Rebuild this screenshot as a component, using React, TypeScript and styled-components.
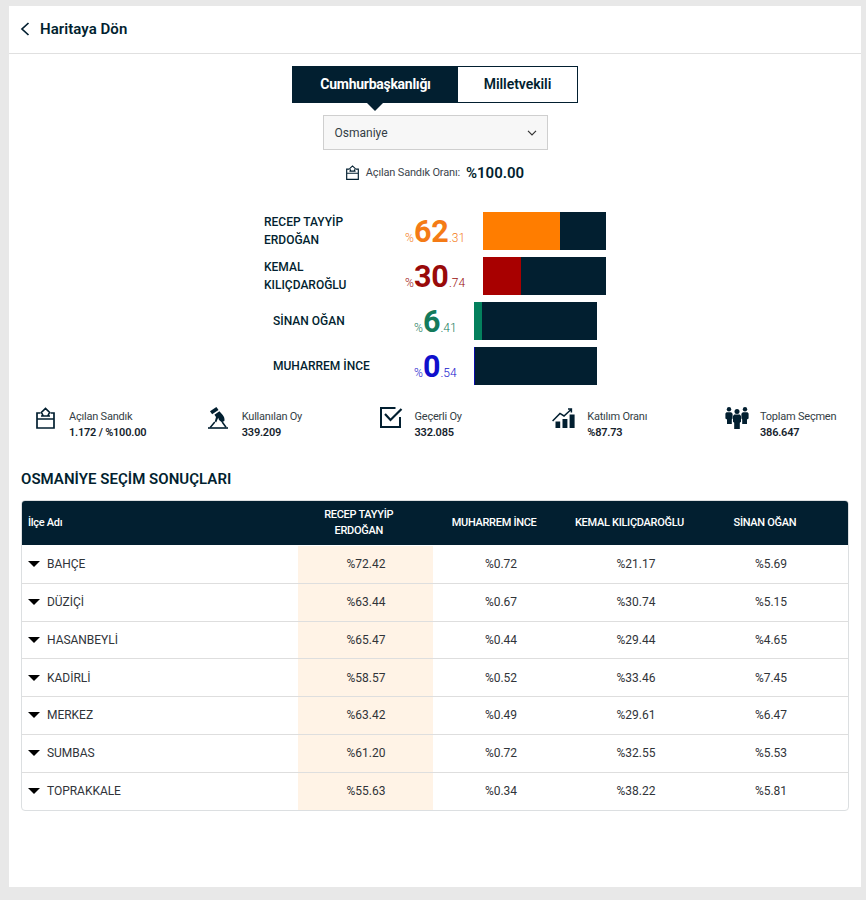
import React from "react";
import styled, { createGlobalStyle } from "styled-components";

const NAVY = "#021f30";

const GlobalStyle = createGlobalStyle`
  *, *::before, *::after { box-sizing: border-box; }
  html { background: #e8e8e8; }
  body { margin: 0; background: #e8e8e8; font-family: Roboto, "Liberation Sans", sans-serif; color: ${NAVY}; }
`;

const Page = styled.div`
  height: 900px;
  padding: 6px 5px 13px 9px;
`;

const Panel = styled.main`
  height: 881px;
  background: #fff;
`;

const Header = styled.header`
  display: flex;
  align-items: center;
  gap: 9px;
  height: 48px;
  padding: 0 0 1px 11px;
  border-bottom: 1px solid #e0e0e0;
`;

const BackLabel = styled.span`
  font-size: 15px;
  font-weight: 600;
  line-height: 20px;
  letter-spacing: 0.05px;
`;

const Selection = styled.section`
  display: flex;
  flex-direction: column;
  align-items: center;
  padding: 12px 0 0 0;
`;

const Tabs = styled.div`
  display: flex;
  width: 286px;
  height: 37px;
  border: 1px solid ${NAVY};
`;

const Tab = styled.div<{ $active?: boolean }>`
  position: relative;
  display: flex;
  align-items: center;
  justify-content: center;
  width: ${(p) => (p.$active ? "165px" : "119px")};
  padding-bottom: 1px;
  background: ${(p) => (p.$active ? NAVY : "#fff")};
  color: ${(p) => (p.$active ? "#fff" : NAVY)};
  font-size: 14px;
  font-weight: ${(p) => (p.$active ? 700 : 600)};
  letter-spacing: ${(p) => (p.$active ? "-0.27px" : "-0.05px")};
`;

const TabPointer = styled.span`
  position: absolute;
  top: 100%;
  left: 50%;
  margin-left: -9.5px;
  border: 9px solid transparent;
  border-top-color: ${NAVY};
  border-bottom: 0;
`;

const CitySelect = styled.div`
  display: flex;
  align-items: center;
  justify-content: space-between;
  width: 225px;
  height: 35px;
  margin-top: 12px;
  padding: 0 10px 0 11px;
  border: 1px solid #cfcfcf;
  background: #f7f7f7;
  color: #333d45;
  font-size: 12px;
`;

const OpenedRate = styled.div`
  display: flex;
  align-items: center;
  height: 20px;
  margin-top: 13px;
`;

const RateLabel = styled.span`
  margin: -2px 6px 0 7px;
  color: #3c454d;
  font-size: 11px;
  font-weight: 400;
  letter-spacing: -0.17px;
`;

const RateValue = styled.span`
  font-size: 15px;
  font-weight: 600;
`;

const Candidates = styled.section`
  display: flex;
  flex-direction: column;
  align-items: center;
  gap: 7px;
  padding-top: 29px;
`;

const CandidateRow = styled.div`
  display: flex;
  align-items: center;
  height: 38px;
`;

const CandidateName = styled.div`
  width: 141px;
  padding-right: 40px;
  font-size: 12px;
  font-weight: 500;
  line-height: 18px;
`;

const Score = styled.div<{ $color: string; $wide: boolean }>`
  display: flex;
  align-items: baseline;
  width: ${(p) => (p.$wide ? "78px" : "60px")};
  padding-top: 7px;
  color: ${(p) => p.$color};
  font-size: 12px;
  font-weight: 300;
  line-height: 38px;
`;

const ScoreWhole = styled.strong`
  font-size: 30.5px;
  font-weight: 700;
`;

const Bar = styled.div`
  width: 123px;
  height: 38px;
  background: ${NAVY};
`;

const BarFill = styled.div<{ $color: string }>`
  height: 100%;
  background: ${(p) => p.$color};
`;

const Stats = styled.section`
  display: grid;
  grid-template-columns: repeat(5, 172.75px);
  height: 34px;
  margin-top: 22px;
  padding-left: 25px;
`;

const Stat = styled.div`
  display: flex;
  align-items: flex-start;
`;

const StatIcon = styled.div<{ $shift?: number }>`
  width: 35px;
  height: 26px;
  flex: none;
  padding-left: ${(p) => p.$shift ?? 0}px;
`;

const StatText = styled.div`
  padding-top: 2px;
  font-size: 11px;
  line-height: 16px;
  font-weight: 400;
  letter-spacing: -0.22px;
  color: #343e46;
  white-space: nowrap;
`;

const StatValue = styled.div`
  font-weight: 600;
  color: #16232d;
`;

const Heading = styled.h2`
  margin: 28px 0 0 12px;
  font-size: 15px;
  font-weight: 600;
  line-height: 20px;
  letter-spacing: 0.04px;
`;

const Table = styled.div`
  width: 828px;
  margin: 11px 0 0 12px;
  border: 1px solid #dcdfe1;
  border-radius: 4px;
  overflow: hidden;
`;

const TableHead = styled.div`
  display: grid;
  grid-template-columns: 269px repeat(4, 135.4px);
  align-items: center;
  height: 44px;
  background: ${NAVY};
  color: #fff;
  font-size: 11px;
  font-weight: 500;
  line-height: 16px;
  letter-spacing: -0.3px;
`;

const HeadCell = styled.div<{ $first?: boolean }>`
  padding: ${(p) => (p.$first ? "0 0 0 6px" : "0 28px")};
  text-align: ${(p) => (p.$first ? "left" : "center")};
  display: flex;
  justify-content: ${(p) => (p.$first ? "flex-start" : "center")};
`;

const HeadText = styled.span<{ $wrap?: boolean }>`
  flex: none;
  width: ${(p) => (p.$wrap ? "80px" : "auto")};
  white-space: ${(p) => (p.$wrap ? "normal" : "nowrap")};
`;

const TableRow = styled.div<{ $tall?: boolean }>`
  display: grid;
  grid-template-columns: 276px repeat(4, 135px);
  height: ${(p) => (p.$tall ? "38.8px" : "37.75px")};
  padding-top: ${(p) => (p.$tall ? "1px" : "0")};
  color: #303439;
  font-size: 12px;
  border-bottom: 1px solid #dedede;
  &:last-child {
    height: 37px;
    border-bottom: 0;
  }
`;

const District = styled.div`
  display: flex;
  align-items: center;
  gap: 7px;
  padding-left: 6px;
  font-weight: 400;
  letter-spacing: -0.03px;
`;

const Triangle = styled.span`
  border: 6px solid transparent;
  border-top-color: #000;
  border-bottom: 0;
`;

const ValueCell = styled.div<{ $lead?: boolean }>`
  display: flex;
  align-items: center;
  justify-content: center;
  padding-left: 1px;
  background: ${(p) => (p.$lead ? "#fff3e6" : "transparent")};
`;

const BallotIcon = ({ size = 19 }: { size?: number }) => (
  <svg width={size} height={(size * 22) / 19} viewBox="0 0 19 22" fill="none" stroke={NAVY} strokeWidth="1.7">
    <path d="M4.5 6H1V21H18V6H14.5M1 12H18" />
    <path d="M7.3 9L5.4 5.4L9.5 1.4L13.6 5.4L11.7 9M5 9H14" strokeWidth="1.6" />
  </svg>
);

const VoteIcon = () => (
  <svg width="20" height="22" viewBox="0 0 20 22" fill={NAVY}>
    <path d="M2 4.2L8.4 0L10.5 3L4.1 7.2Z" />
    <path d="M6.4 7.7L11.4 4.3L14.3 7.4C16 9.4 16.9 11.5 16.4 14L13.8 15.3L11 13.1L10.2 10.7L8.3 15.2L6.8 14.5L8 10Z" />
    <path d="M6.8 15L2.2 20.5M14.2 15L18 20.2" stroke={NAVY} strokeWidth="1.5" fill="none" />
    <path d="M0 20.2H20V21.8H0Z" />
  </svg>
);

const CheckIcon = () => (
  <svg width="23" height="21" viewBox="0 0 23 21" fill="none" stroke={NAVY} strokeWidth="2">
    <path d="M15.5 1H1V20H20V10" />
    <path d="M5 7L10.5 13L21.5 2" strokeWidth="2.2" />
  </svg>
);

const ChartIcon = () => (
  <svg width="23" height="22" viewBox="0 0 23 22" fill={NAVY}>
    <path d="M3.5 14.5H8.2V21H3.5ZM10.5 12H15.4V21H10.5ZM17.6 7.5H22.6V21H17.6Z" />
    <path d="M.6 14L8 6.4L12 9L18.8 2.7M16 2.1H19.4V5.4" fill="none" stroke={NAVY} strokeWidth="1.5" />
  </svg>
);

const PeopleIcon = () => (
  <svg width="24" height="22" viewBox="0 0 24 22" fill={NAVY}>
    <circle cx="4" cy="2.2" r="2.2" />
    <circle cx="20" cy="2.2" r="2.2" />
    <circle cx="12" cy="4.4" r="2.5" />
    <path d="M1.5 5.3H6.2L7.6 6.8V11.5L6.8 12.5V17H2V12.5L.4 11.5V6.6Z" />
    <path d="M22.5 5.3H17.8L16.4 6.8V11.5L17.2 12.5V17H22V12.5L23.6 11.5V6.6Z" />
    <path d="M9.2 7.6H14.8L16 9V14.8L14.8 15.8V22H9.2V15.8L8 14.8V9Z" />
  </svg>
);

const candidates = [
  { name: "RECEP TAYYİP ERDOĞAN", whole: "62", part: ".31", value: 62.31, color: "#ff7d00", text: "#f47b16" },
  { name: "KEMAL KILIÇDAROĞLU", whole: "30", part: ".74", value: 30.74, color: "#a80000", text: "#990a0a" },
  { name: "SİNAN OĞAN", whole: "6", part: ".41", value: 6.41, color: "#04805d", text: "#137a5b" },
  { name: "MUHARREM İNCE", whole: "0", part: ".54", value: 0.54, color: "#0a0aa8", text: "#1010cc" },
];

const stats = [
  { label: "Açılan Sandık", value: "1.172 / %100.00", icon: <BallotIcon />, shift: 2 },
  { label: "Kullanılan Oy", value: "339.209", icon: <VoteIcon />, shift: 1 },
  { label: "Geçerli Oy", value: "332.085", icon: <CheckIcon /> },
  { label: "Katılım Oranı", value: "%87.73", icon: <ChartIcon /> },
  { label: "Toplam Seçmen", value: "386.647", icon: <PeopleIcon /> },
];

const columns = ["RECEP TAYYİP ERDOĞAN", "MUHARREM İNCE", "KEMAL KILIÇDAROĞLU", "SİNAN OĞAN"];

const districts: [string, string[]][] = [
  ["BAHÇE", ["%72.42", "%0.72", "%21.17", "%5.69"]],
  ["DÜZİÇİ", ["%63.44", "%0.67", "%30.74", "%5.15"]],
  ["HASANBEYLİ", ["%65.47", "%0.44", "%29.44", "%4.65"]],
  ["KADİRLİ", ["%58.57", "%0.52", "%33.46", "%7.45"]],
  ["MERKEZ", ["%63.42", "%0.49", "%29.61", "%6.47"]],
  ["SUMBAS", ["%61.20", "%0.72", "%32.55", "%5.53"]],
  ["TOPRAKKALE", ["%55.63", "%0.34", "%38.22", "%5.81"]],
];

export default function App() {
  return (
    <Page>
      <GlobalStyle />
      <Panel>
        <Header>
          <svg width="11" height="14" viewBox="0 0 11 14" fill="none" stroke={NAVY} strokeWidth="1.7">
            <path d="M8.5 1L2 7L8.5 13" />
          </svg>
          <BackLabel>Haritaya Dön</BackLabel>
        </Header>
        <Selection>
          <Tabs>
            <Tab $active>
              Cumhurbaşkanlığı
              <TabPointer />
            </Tab>
            <Tab>Milletvekili</Tab>
          </Tabs>
          <CitySelect>
            Osmaniye
            <svg width="10" height="6" viewBox="0 0 10 6" fill="none" stroke="#333" strokeWidth="1.2">
              <path d="M1 .8L5 4.8L9 .8" />
            </svg>
          </CitySelect>
          <OpenedRate>
            <BallotIcon size={13} />
            <RateLabel>Açılan Sandık Oranı:</RateLabel>
            <RateValue>%100.00</RateValue>
          </OpenedRate>
        </Selection>
        <Candidates>
          {candidates.map((c) => (
            <CandidateRow key={c.name}>
              <CandidateName>{c.name}</CandidateName>
              <Score $color={c.text} $wide={c.whole.length > 1}>
                %<ScoreWhole>{c.whole}</ScoreWhole>
                {c.part}
              </Score>
              <Bar>
                <BarFill $color={c.color} style={{ width: `${c.value}%` }} />
              </Bar>
            </CandidateRow>
          ))}
        </Candidates>
        <Stats>
          {stats.map((s) => (
            <Stat key={s.label}>
              <StatIcon $shift={s.shift}>{s.icon}</StatIcon>
              <StatText>
                {s.label}
                <StatValue>{s.value}</StatValue>
              </StatText>
            </Stat>
          ))}
        </Stats>
        <Heading>OSMANİYE SEÇİM SONUÇLARI</Heading>
        <Table>
          <TableHead>
            <HeadCell $first>İlçe Adı</HeadCell>
            {columns.map((c, i) => (
              <HeadCell key={c}>
                <HeadText $wrap={i === 0}>{c}</HeadText>
              </HeadCell>
            ))}
          </TableHead>
          {districts.map(([name, values], row) => (
            <TableRow key={name} $tall={row === 0}>
              <District>
                <Triangle />
                {name}
              </District>
              {values.map((v, i) => (
                <ValueCell key={i} $lead={i === 0}>
                  {v}
                </ValueCell>
              ))}
            </TableRow>
          ))}
        </Table>
      </Panel>
    </Page>
  );
}
